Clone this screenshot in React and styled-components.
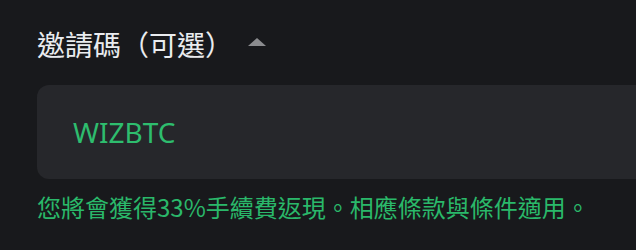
import styled, { createGlobalStyle } from 'styled-components';

const Global = createGlobalStyle`
  html, body {
    margin: 0;
    padding: 0;
    background: #18191c;
    overflow: hidden;
  }
  body {
    font-family: "Noto Sans", "Noto Sans CJK TC", sans-serif;
  }
`;

const Wrap = styled.div`
  width: 636px;
  height: 250px;
  box-sizing: border-box;
  padding: 23px 0 0 37px;
  background: #18191c;
  overflow: hidden;
`;

const Header = styled.div`
  display: flex;
  align-items: center;
  height: 42px;
`;

const Title = styled.div`
  font-family: "Noto Sans CJK TC", sans-serif;
  font-size: 28px;
  color: #eaecef;
  line-height: 42px;
`;

const Arrow = styled.span`
  margin-left: 15px;
  width: 0;
  height: 0;
  border-left: 9px solid transparent;
  border-right: 9px solid transparent;
  border-bottom: 8px solid #8b8c8f;
  margin-top: -4px;
`;

const Field = styled.div`
  display: flex;
  align-items: center;
  margin-top: 20px;
  width: 640px;
  height: 94px;
  box-sizing: border-box;
  padding-left: 36px;
  border-radius: 12px;
  background: #26272b;
`;

const Value = styled.span`
  font-family: "Noto Sans", sans-serif;
  font-size: 28px;
  color: #2ebd6e;
`;

const Hint = styled.div`
  margin-top: 12px;
  font-family: "Noto Sans CJK TC", sans-serif;
  font-size: 24px;
  line-height: 32px;
  color: #2ab86a;
`;

const App = () => {
  return (
    <>
      <Global />
      <Wrap>
        <Header>
          <Title>邀請碼（可選）</Title>
          <Arrow />
        </Header>
        <Field>
          <Value>WIZBTC</Value>
        </Field>
        <Hint>您將會獲得33%手續費返現。相應條款與條件適用。</Hint>
      </Wrap>
    </>
  );
};

export default App;
